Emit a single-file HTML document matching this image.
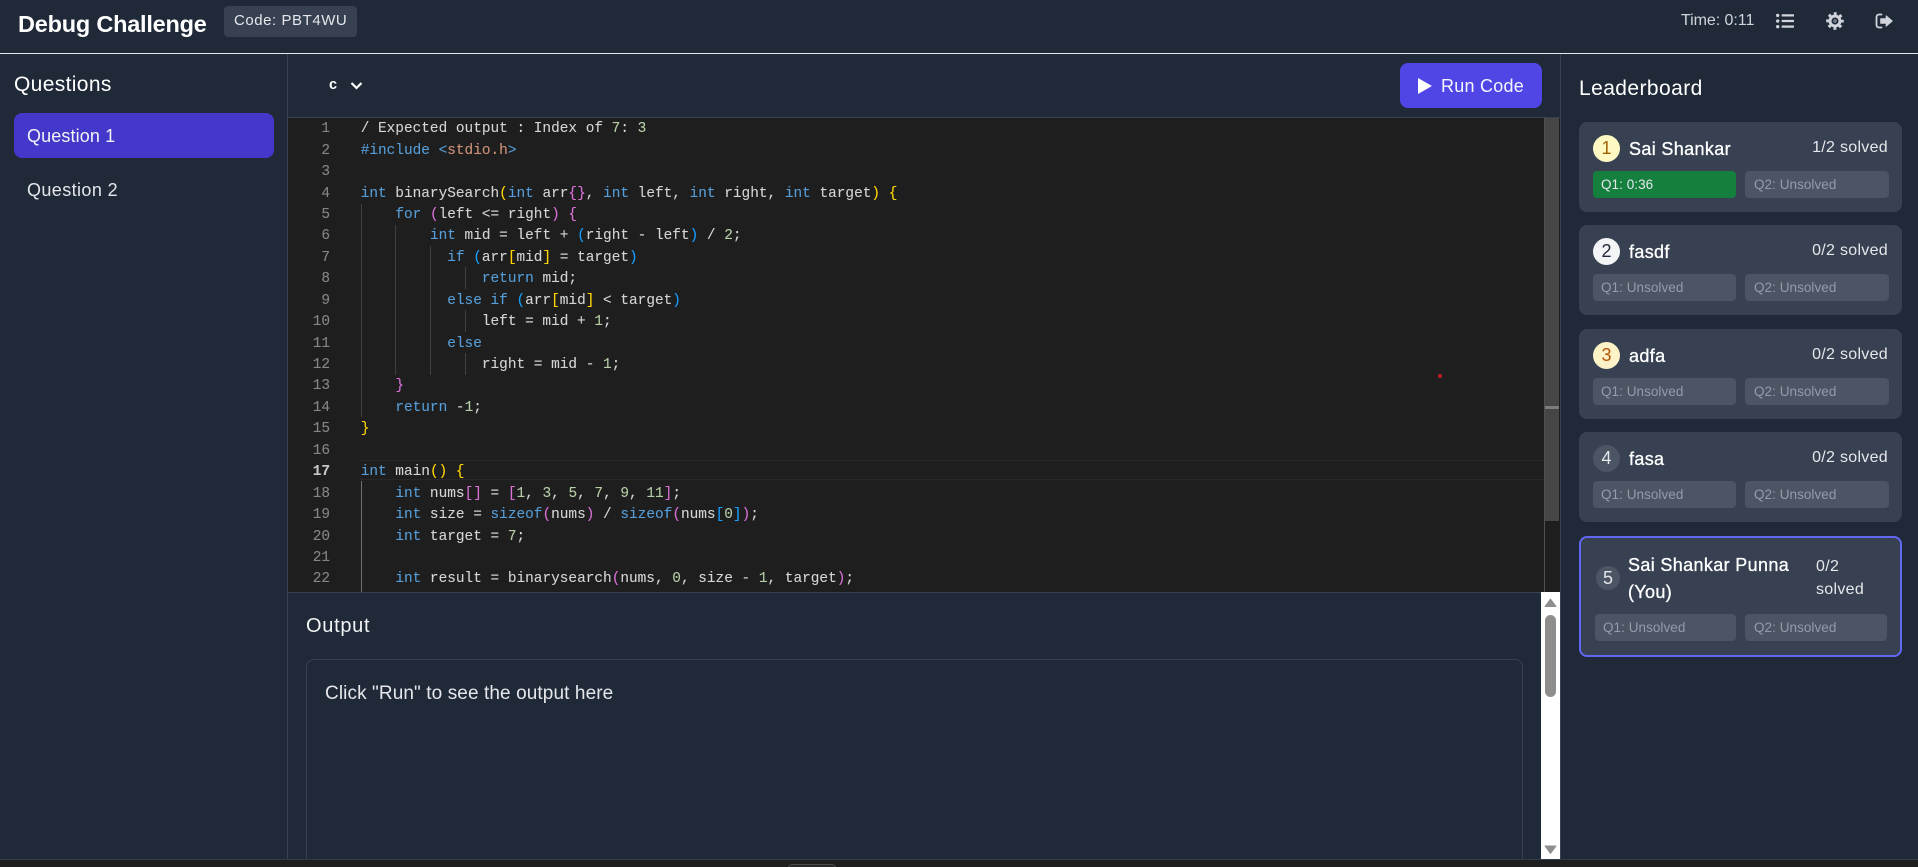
<!DOCTYPE html>
<html><head><meta charset="utf-8"><title>Debug Challenge</title>
<style>
*{box-sizing:border-box}
html,body{margin:0;padding:0;width:1918px;height:867px;overflow:hidden;background:#1f2937;font-family:"Liberation Sans",sans-serif;color:#fff}
body{position:relative}
.a{position:absolute;white-space:nowrap}
.t{position:absolute;white-space:nowrap;line-height:1}
#code{position:absolute;left:288px;top:118px;width:1272px;height:474px;background:#1e1e1e;overflow:hidden;font-family:"Liberation Mono",monospace;font-size:14.43px;color:#d4d4d4;-webkit-text-stroke:.1px currentColor}
.l{position:absolute;left:72.7px;height:21.44px;line-height:21.44px;white-space:pre}
.n{position:absolute;left:0;width:42px;text-align:right;height:21.44px;line-height:21.44px;color:#858585}
.g{position:absolute;width:1px;background:#404040}
.k{color:#569cd6}.d{color:#b5cea8}.s{color:#ce9178}.y{color:#ffd700}.p{color:#da70d6}.b{color:#179fff}
.card{position:absolute;left:1579px;width:323px;height:90px;background:#374151;border-radius:8px}
.rank{position:absolute;left:14px;top:13px;width:27px;height:27px;border-radius:50%;text-align:center;line-height:27px;font-size:18px}
.name{position:absolute;left:50px;top:16px;font-size:18px;line-height:22px;font-weight:400;letter-spacing:.35px;-webkit-text-stroke:.3px #fff;white-space:nowrap}
.sol{position:absolute;right:14px;top:16px;font-size:16px;line-height:20px;color:#e5e7eb;letter-spacing:.3px;white-space:nowrap}
.pill{position:absolute;top:49px;height:27px;border-radius:4px;background:#4b5563;color:#939cab;font-size:13.5px;line-height:28px;padding-left:8px;letter-spacing:.05px;white-space:nowrap}
.p1{left:14px;width:143px}.p2{left:166px;width:144px;padding-left:9px}
</style></head><body>
<!-- header -->
<div class="a" style="left:0;top:53px;width:1918px;height:1px;background:#e5e7eb"></div>
<div class="t" style="left:18px;top:10px;font-size:23.5px;font-weight:700;line-height:28px;letter-spacing:-.22px">Debug Challenge</div>
<div class="a" style="left:224px;top:6px;width:133px;height:31px;background:#374151;border-radius:4px;font-size:15px;line-height:29px;padding-left:10px;color:#e5e7eb;letter-spacing:.55px">Code: PBT4WU</div>
<div class="t" style="left:1681px;top:12px;font-size:16px;line-height:18px;color:#d1d5db;letter-spacing:-.05px">Time: 0:11</div>
<svg class="a" style="left:1776px;top:12px" width="18" height="18" viewBox="0 0 512 512" fill="#d1d5db"><path d="M48 48a48 48 0 1 0 48 48 48 48 0 0 0-48-48zm0 160a48 48 0 1 0 48 48 48 48 0 0 0-48-48zm0 160a48 48 0 1 0 48 48 48 48 0 0 0-48-48zm448 16H176a16 16 0 0 0-16 16v32a16 16 0 0 0 16 16h320a16 16 0 0 0 16-16v-32a16 16 0 0 0-16-16zm0-320H176a16 16 0 0 0-16 16v32a16 16 0 0 0 16 16h320a16 16 0 0 0 16-16V80a16 16 0 0 0-16-16zm0 160H176a16 16 0 0 0-16 16v32a16 16 0 0 0 16 16h320a16 16 0 0 0 16-16v-32a16 16 0 0 0-16-16z"/></svg>
<svg class="a" style="left:1826px;top:12px" width="18" height="18" viewBox="0 0 18 18" fill="none" stroke="#d1d5db"><circle cx="9" cy="9" r="7.3" stroke-width="3" stroke-dasharray="2.87 2.86" stroke-dashoffset="1.43"/><circle cx="9" cy="9" r="5" stroke-width="3"/><circle cx="9" cy="9" r="2" fill="#6b7280" stroke="none"/></svg>
<svg class="a" style="left:1875px;top:12px" width="18" height="18" viewBox="0 0 18 18"><path d="M6.5 2.5H4A2.5 2.5 0 0 0 1.5 5v8A2.5 2.5 0 0 0 4 15.5h2.5" fill="none" stroke="#d1d5db" stroke-width="1.8" stroke-linecap="round"/><path d="M11 3.5 L17.5 9 L11 14.5 V11.5 H5.5 V6.5 H11 Z" fill="#d1d5db" stroke="#d1d5db" stroke-width=".6" stroke-linejoin="round"/></svg>

<!-- left panel -->
<div class="a" style="left:287px;top:54px;width:1px;height:805px;background:#374151"></div>
<div class="t" style="left:14px;top:73px;font-size:21px;line-height:24px;letter-spacing:.35px">Questions</div>
<div class="a" style="left:14px;top:113px;width:260px;height:45px;background:#4338ca;border-radius:8px;font-size:18px;line-height:46px;padding-left:13px;color:#f3f4f6;letter-spacing:.12px">Question 1</div>
<div class="a" style="left:27px;top:168px;font-size:18px;line-height:44px;color:#e5e7eb;letter-spacing:.4px">Question 2</div>

<!-- toolbar -->
<div class="a" style="left:288px;top:117px;width:1272px;height:1px;background:#374151"></div>
<div class="t" style="left:329px;top:76px;font-size:14.5px;line-height:18px;font-weight:700">c</div>
<svg class="a" style="left:350px;top:79px" width="13" height="13" viewBox="0 0 13 13" fill="none" stroke="#fff" stroke-width="2.2"><path d="M1.5 4 L6.5 9 L11.5 4"/></svg>
<div class="a" style="left:1400px;top:63px;width:142px;height:45px;background:#4f46e5;border-radius:8px"></div>
<svg class="a" style="left:1418px;top:78px" width="14" height="16" viewBox="0 0 14 16"><path d="M0 0 L14 8 L0 16 Z" fill="#fff"/></svg>
<div class="t" style="left:1441px;top:75px;font-size:18px;line-height:22px;letter-spacing:.25px;color:#f5f5ff">Run Code</div>

<!-- editor -->
<div id="code">
<div class="a" style="left:72px;top:342px;width:1184px;height:20px;border-top:1px solid #282828;border-bottom:1px solid #282828"></div>
<div class="g" style="left:72.5px;top:86px;height:213px"></div>
<div class="g" style="left:107.2px;top:107px;height:150px"></div>
<div class="g" style="left:141.8px;top:128px;height:129px"></div>
<div class="g" style="left:176.5px;top:149px;height:22px"></div>
<div class="g" style="left:176.5px;top:192px;height:22px"></div>
<div class="g" style="left:176.5px;top:235px;height:22px"></div>
<div class="g" style="left:72.5px;top:363px;height:111px;background:#707070"></div>

<div class="n" style="top:1.2px">1</div><div class="l" style="top:1.2px">/ Expected output : Index of <span class="d">7</span>: <span class="d">3</span></div>
<div class="n" style="top:22.64px">2</div><div class="l" style="top:22.64px"><span class="k">#include</span> <span class="k">&lt;</span><span class="s">stdio.h</span><span class="k">&gt;</span></div>
<div class="n" style="top:44.08px">3</div>
<div class="n" style="top:65.52px">4</div><div class="l" style="top:65.52px"><span class="k">int</span> binarySearch<span class="y">(</span><span class="k">int</span> arr<span class="p">{}</span>, <span class="k">int</span> left, <span class="k">int</span> right, <span class="k">int</span> target<span class="y">)</span> <span class="y">{</span></div>
<div class="n" style="top:86.96px">5</div><div class="l" style="top:86.96px">    <span class="k">for</span> <span class="p">(</span>left &lt;= right<span class="p">)</span> <span class="p">{</span></div>
<div class="n" style="top:108.4px">6</div><div class="l" style="top:108.4px">        <span class="k">int</span> mid = left + <span class="b">(</span>right - left<span class="b">)</span> / <span class="d">2</span>;</div>
<div class="n" style="top:129.84px">7</div><div class="l" style="top:129.84px">          <span class="k">if</span> <span class="b">(</span>arr<span class="y">[</span>mid<span class="y">]</span> = target<span class="b">)</span></div>
<div class="n" style="top:151.28px">8</div><div class="l" style="top:151.28px">              <span class="k">return</span> mid;</div>
<div class="n" style="top:172.72px">9</div><div class="l" style="top:172.72px">          <span class="k">else</span> <span class="k">if</span> <span class="b">(</span>arr<span class="y">[</span>mid<span class="y">]</span> &lt; target<span class="b">)</span></div>
<div class="n" style="top:194.16px">10</div><div class="l" style="top:194.16px">              left = mid + <span class="d">1</span>;</div>
<div class="n" style="top:215.6px">11</div><div class="l" style="top:215.6px">          <span class="k">else</span></div>
<div class="n" style="top:237.04px">12</div><div class="l" style="top:237.04px">              right = mid - <span class="d">1</span>;</div>
<div class="n" style="top:258.48px">13</div><div class="l" style="top:258.48px">    <span class="p">}</span></div>
<div class="n" style="top:279.92px">14</div><div class="l" style="top:279.92px">    <span class="k">return</span> -<span class="d">1</span>;</div>
<div class="n" style="top:301.36px">15</div><div class="l" style="top:301.36px"><span class="y">}</span></div>
<div class="n" style="top:322.8px">16</div>
<div class="n" style="top:344.24px;color:#c6c6c6;font-weight:700">17</div><div class="l" style="top:344.24px"><span class="k">int</span> main<span class="y">()</span> <span class="y">{</span></div>
<div class="n" style="top:365.68px">18</div><div class="l" style="top:365.68px">    <span class="k">int</span> nums<span class="p">[]</span> = <span class="p">[</span><span class="d">1</span>, <span class="d">3</span>, <span class="d">5</span>, <span class="d">7</span>, <span class="d">9</span>, <span class="d">11</span><span class="p">]</span>;</div>
<div class="n" style="top:387.12px">19</div><div class="l" style="top:387.12px">    <span class="k">int</span> size = <span class="k">sizeof</span><span class="p">(</span>nums<span class="p">)</span> / <span class="k">sizeof</span><span class="p">(</span>nums<span class="b">[</span><span class="d">0</span><span class="b">]</span><span class="p">)</span>;</div>
<div class="n" style="top:408.56px">20</div><div class="l" style="top:408.56px">    <span class="k">int</span> target = <span class="d">7</span>;</div>
<div class="n" style="top:430px">21</div>
<div class="n" style="top:451.44px">22</div><div class="l" style="top:451.44px">    <span class="k">int</span> result = binarysearch<span class="p">(</span>nums, <span class="d">0</span>, size - <span class="d">1</span>, target<span class="p">)</span>;</div>
<!-- scrollbar -->
<div class="a" style="left:1256px;top:0;width:15px;height:474px;background:#1e1e1e;border-left:1px solid #505050"></div>
<div class="a" style="left:1257px;top:0;width:14px;height:403px;background:#464646"></div>
<div class="a" style="left:1257px;top:288px;width:14px;height:3px;background:#7d7d7d"></div>
</div>
<div class="a" style="left:1438px;top:374px;width:4px;height:4px;border-radius:50%;background:#c02020"></div>
<div class="a" style="left:288px;top:592px;width:1272px;height:1px;background:#374151"></div>

<!-- output -->
<div class="t" style="left:306px;top:614px;font-size:20px;line-height:24px;letter-spacing:.7px;color:#f3f4f6">Output</div>
<div class="a" style="left:306px;top:659px;width:1217px;height:200px;border:1px solid #374151;border-bottom:none;border-radius:8px 8px 0 0"></div>
<div class="t" style="left:325px;top:683px;font-size:19px;line-height:22px;color:#e5e7eb;letter-spacing:.1px">Click "Run" to see the output here</div>
<div class="a" style="left:1541px;top:592px;width:19px;height:267px;background:#fff"></div>
<div class="a" style="left:1545px;top:615px;width:11px;height:82px;background:#8f8e8c;border-radius:6px"></div>
<svg class="a" style="left:1544px;top:598px" width="13" height="10"><path d="M6.5 1 L12 8.5 L1 8.5 Z" fill="#8f8e8c" stroke="#8f8e8c" stroke-linejoin="round"/></svg>
<svg class="a" style="left:1544px;top:845px" width="13" height="10"><path d="M1 1 L12 1 L6.5 8.5 Z" fill="#8f8e8c" stroke="#8f8e8c" stroke-linejoin="round"/></svg>
<div class="a" style="left:0;top:859px;width:1918px;height:8px;background:#1e1e1e;border-top:1px solid #2f3f50;overflow:hidden"><div class="a" style="left:788px;top:4px;width:48px;height:8px;background:#282828;border:1px solid #484848;border-radius:5px"></div></div>

<!-- leaderboard -->
<div class="a" style="left:1560px;top:54px;width:1px;height:805px;background:#374151"></div>
<div class="t" style="left:1579px;top:77px;font-size:21px;line-height:24px;letter-spacing:.42px">Leaderboard</div>

<div class="card" style="top:122px">
 <div class="rank" style="background:#fef9c3;color:#a16207">1</div><div class="name">Sai Shankar</div><div class="sol">1/2 solved</div>
 <div class="pill p1" style="background:#15803d;color:#e5e7eb">Q1: 0:36</div><div class="pill p2">Q2: Unsolved</div>
</div>
<div class="card" style="top:225px">
 <div class="rank" style="background:#f3f4f6;color:#1f2937">2</div><div class="name">fasdf</div><div class="sol">0/2 solved</div>
 <div class="pill p1">Q1: Unsolved</div><div class="pill p2">Q2: Unsolved</div>
</div>
<div class="card" style="top:329px">
 <div class="rank" style="background:#fef3c7;color:#b45309">3</div><div class="name">adfa</div><div class="sol">0/2 solved</div>
 <div class="pill p1">Q1: Unsolved</div><div class="pill p2">Q2: Unsolved</div>
</div>
<div class="card" style="top:432px">
 <div class="rank" style="background:#4b5563;color:#e5e7eb">4</div><div class="name">fasa</div><div class="sol">0/2 solved</div>
 <div class="pill p1">Q1: Unsolved</div><div class="pill p2">Q2: Unsolved</div>
</div>
<div class="card" style="top:536px;height:121px;border:2px solid #6366f1">
 <div class="rank" style="left:15px;top:28px;width:24px;height:24px;line-height:24px;background:#4b5563;color:#e5e7eb">5</div>
 <div class="name" style="left:47px;top:14px;line-height:27px">Sai Shankar Punna<br>(You)</div>
 <div class="sol" style="left:235px;right:auto;top:17px;line-height:23px">0/2<br>solved</div>
 <div class="pill" style="left:14px;width:141px;top:76px">Q1: Unsolved</div><div class="pill" style="left:164px;width:142px;top:76px;padding-left:9px">Q2: Unsolved</div>
</div>
</body></html>
